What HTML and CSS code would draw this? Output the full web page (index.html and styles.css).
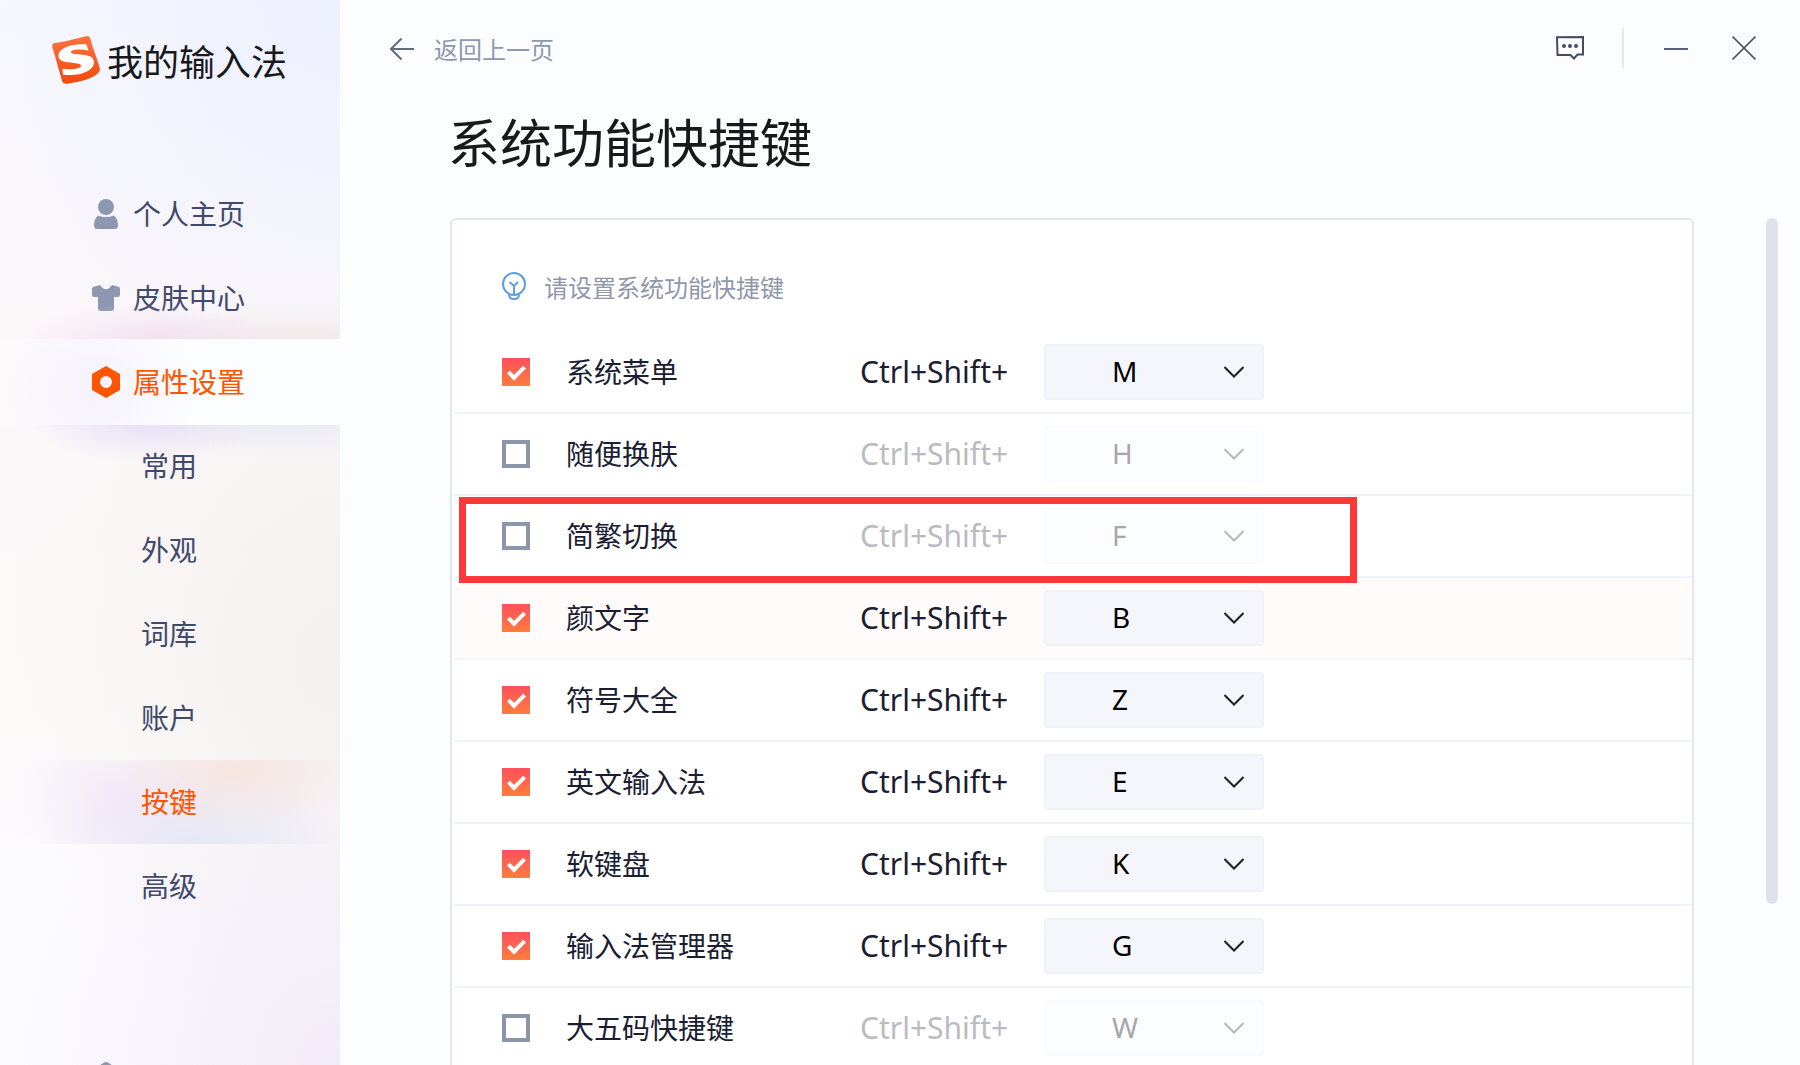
FILE: index.html
```
<!DOCTYPE html>
<html lang="zh-CN">
<head>
    <meta charset="UTF-8">
    <meta name="viewport" content="width=device-width, initial-scale=1.0">
    <title>系统功能快捷键</title>
    <link rel="stylesheet" href="styles.css">
</head>
<body>

    <aside class="sidebar">
        <div class="logo">
            <svg width="50" height="50" viewBox="0 0 50 50">
                <defs>
                    <linearGradient id="logoFill" x1="0" y1="0" x2="0" y2="1">
                        <stop offset="0" stop-color="#fb7340"/>
                        <stop offset="1" stop-color="#f14a0c"/>
                    </linearGradient>
                </defs>
                <path fill="url(#logoFill)" d="M3 8C14 6.500 24 3.500 34 1.200q3.500-.7 4.500 2.800c2 9 6.500 19 9 28 1 3.500 0 5.500-3 7.500-8 5.500-18 7.500-29 9.300-3.500.4-5-.8-5.800-4C6.500 34 3.500 22 .4 12.500Q-.4 8.500 3 8z"/>
                <path fill="#fff" d="M34.500 9.500C22 8.500 6.500 12 6.500 21c0 9.500 22.500 5 22.500 9.500 0 3.500-10 4.500-18.500 3.300l.5 6C28 41.500 42 36 42 27c0-10.500-23-6-23-9.800 0-3.200 9-3.500 17.500-1.700z"/>
            </svg>
            <span class="logo-text">我的输入法</span>
        </div>

        <nav class="nav">
            <a class="nav-item" href="#">
                <svg width="28" height="32" viewBox="0 0 28 32" fill="#8d98b0"><circle cx="14" cy="9" r="8"/><path d="M6 17.500q8 3 16 0 4 3.500 4 10 0 3.500-3 3.500H5q-3 0-3-3.500 0-6.500 4-10z"/></svg>
                个人主页
            </a>
            <a class="nav-item" href="#">
                <svg width="28" height="32" viewBox="0 0 28 32" fill="#8d98b0"><path d="M8 3q6 8.500 12 0l7 2q1 .5 1 1.500V13q0 2-2 2h-4v11q0 3-3 3H9q-3 0-3-3V15H2q-2 0-2-2V6.500Q0 5.500 1 5z"/></svg>
                皮肤中心
            </a>
            <a class="nav-item nav-active" href="#">
                <svg width="28" height="32" viewBox="0 0 28 32"><path fill="#ff5400" fill-rule="evenodd" d="M14 0l14 8v16l-14 8-14-8V8zM14 10a6 6 0 1 0 0 12 6 6 0 0 0 0-12z"/></svg>
                属性设置
            </a>
            <a class="nav-item nav-sub" href="#">常用</a>
            <a class="nav-item nav-sub" href="#">外观</a>
            <a class="nav-item nav-sub" href="#">词库</a>
            <a class="nav-item nav-sub" href="#">账户</a>
            <a class="nav-item nav-sub nav-current" href="#">按键</a>
            <a class="nav-item nav-sub" href="#">高级</a>
        </nav>

        <div class="nav-more">
            <svg width="28" height="28" viewBox="0 0 28 28" fill="#8d98b0"><path d="M12 .5q2-1 4 0l12 8V28H0V8.500z"/></svg>
        </div>
    </aside>

    <main class="main">
        <header class="topbar">
            <a class="back" href="#">
                <svg width="24" height="24" viewBox="0 0 24 24" fill="none" stroke="#626b80" stroke-width="2"><path d="M24 13H1.500M11.500 2.500L1 13l10.500 10.500"/></svg>
                返回上一页
            </a>
            <div class="window-buttons">
                <button type="button" class="win-btn" aria-label="反馈">
                    <svg width="28" height="24" viewBox="0 0 28 24"><path fill="#fff" stroke="#454b66" stroke-width="2" d="M1 1.200L27 1v17.500h-5.500L18 22.500l-3.500-3.500H1.500z"/><g fill="#454b66"><circle cx="8" cy="10" r="2"/><circle cx="14" cy="10" r="2"/><circle cx="20" cy="10" r="2"/></g></svg>
                </button>
                <span class="win-line"></span>
                <button type="button" class="win-btn" aria-label="最小化">
                    <svg width="24" height="24" viewBox="0 0 24 24"><path stroke="#5a6180" stroke-width="2" d="M0 13h24"/></svg>
                </button>
                <button type="button" class="win-btn win-close" aria-label="关闭">
                    <svg width="24" height="24" viewBox="0 0 24 24"><path stroke="#4d536b" stroke-width="1.600" d="M.5.5l23 23M23.500.5l-23 23"/></svg>
                </button>
            </div>
        </header>

        <h1 class="title">系统功能快捷键</h1>

        <div class="content">
            <section class="card">
                <p class="hint">
                    <svg width="24" height="28" viewBox="0 0 24 28" fill="none" stroke="#5c9fe0" stroke-width="2"><circle cx="12" cy="12" r="11"/><path d="M12 23V14M7.500 10l4.500 4 4-4"/><path d="M7 22.500q0 4.500 5 4.500t5-4.500" /></svg>
                    请设置系统功能快捷键
                </p>
                <div id="rows"></div>
            </section>
            <div class="scroll-track"><div class="scroll-thumb"></div></div>
        </div>
    </main>

    <script>
        var shortcuts = [
            { name: '系统菜单', key: 'M', on: true },
            { name: '随便换肤', key: 'H', on: false },
            { name: '简繁切换', key: 'F', on: false, marked: true },
            { name: '颜文字', key: 'B', on: true, hover: true },
            { name: '符号大全', key: 'Z', on: true },
            { name: '英文输入法', key: 'E', on: true },
            { name: '软键盘', key: 'K', on: true },
            { name: '输入法管理器', key: 'G', on: true },
            { name: '大五码快捷键', key: 'W', on: false }
        ];

        var html = '';
        shortcuts.forEach(function (item, i) {
            var cls = 'row' + (item.on ? '' : ' row-off') + (item.hover ? ' row-hover' : '') + (item.marked ? ' row-marked' : '');
            html += '<div class="' + cls + '">' +
                '<input type="checkbox" class="check" id="check' + i + '"' + (item.on ? ' checked' : '') + '>' +
                '<label class="name" for="check' + i + '">' + item.name + '</label>' +
                '<label class="combo" for="key' + i + '">Ctrl+Shift+</label>' +
                '<span class="select-wrap">' +
                '<select class="key" id="key' + i + '"' + (item.on ? '' : ' disabled') + '><option>' + item.key + '</option></select>' +
                '<svg class="arrow" width="20" height="12" viewBox="0 0 20 12" fill="none" stroke="#202124" stroke-width="2"><path d="M.5 1l9.500 9.500L19.500 1"/></svg>' +
                '</span></div>';
        });
        document.getElementById('rows').innerHTML = html;

        // Enable or disable the key list together with its checkbox
        document.getElementById('rows').addEventListener('change', function (e) {
            if (e.target.type !== 'checkbox') {
                return;
            }
            var row = e.target.parentNode;
            row.classList.toggle('row-off', !e.target.checked);
            row.querySelector('select').disabled = !e.target.checked;
        });
    </script>

</body>
</html>
```

FILE: styles.css
```
*,
*::before,
*::after {
    box-sizing: border-box;
}

body {
    margin: 0;
    height: 100vh;
    display: flex;
    overflow: hidden;
    background: #fcfdff;
    color: #1b1d33;
    font-family: "Noto Sans", "Noto Sans CJK SC", sans-serif;
    font-size: 28px;
}

a {
    color: inherit;
    text-decoration: none;
}

svg {
    display: block;
    flex: none;
}

/* Sidebar */
.sidebar {
    flex: none;
    width: 340px;
    display: flex;
    flex-direction: column;
    background:
        radial-gradient(ellipse 400px 420px at 100% 0, #edf0fe 0%, rgba(237, 240, 254, 0) 100%),
        radial-gradient(ellipse 340px 330px at 100% 100%, #f2ebf8 0%, rgba(242, 235, 248, 0) 100%),
        radial-gradient(ellipse 340px 400px at 100% 62%, #f4f0ef 0%, rgba(244, 240, 239, 0) 100%),
        linear-gradient(#f8f8fe 0%, #fbf7f9 30%, #fcf9f9 65%, #fcfcff 90%);
    color: #41496a;
}

.logo {
    flex: none;
    display: flex;
    align-items: center;
    gap: 5px;
    height: 120px;
    padding-left: 52px;
    color: #17191c;
}

.logo-text {
    font-size: 36px;
}

.nav {
    flex: none;
    margin-top: 52px;
}

.nav-item {
    position: relative;
    z-index: 0;
    display: flex;
    align-items: center;
    gap: 13px;
    height: 84px;
    padding: 0 0 2px 92px;
}

.nav-item svg {
    margin-top: 2px;
}

.nav-sub {
    padding-left: 141px;
}

.nav-active,
.nav-current {
    color: #ff5400;
}

/* soft glow above and below the active group */
.nav-active::before {
    content: "";
    position: absolute;
    z-index: -2;
    inset: -40px 0;
    background:
        radial-gradient(ellipse 130px 40px at 44% 26%, rgba(240, 215, 236, 0.7), rgba(240, 215, 236, 0)),
        radial-gradient(ellipse 200px 36px at 90% 26%, rgba(240, 226, 224, 0.7), rgba(240, 226, 224, 0)),
        radial-gradient(ellipse 120px 44px at 42% 72%, rgba(226, 216, 246, 0.8), rgba(226, 216, 246, 0)),
        radial-gradient(ellipse 180px 40px at 84% 73%, rgba(228, 232, 246, 0.8), rgba(228, 232, 246, 0));
}

.nav-active::after {
    content: "";
    position: absolute;
    z-index: -1;
    inset: -1px 0;
    background:
        radial-gradient(ellipse 100px 90px at 28% 60%, #f5f2fc, rgba(245, 242, 252, 0)),
        linear-gradient(90deg, #fcf9fa, #fcfdff 50%);
}

.nav-current {
    background:
        radial-gradient(ellipse 120px 64px at 70% 10%, rgba(246, 222, 215, 0.7), rgba(246, 222, 215, 0)),
        radial-gradient(ellipse 110px 90px at 36% 50%, rgba(238, 226, 247, 0.7), rgba(238, 226, 247, 0)),
        radial-gradient(ellipse 150px 80px at 58% 100%, rgba(222, 229, 244, 0.8), rgba(222, 229, 244, 0));
}

.nav-more {
    margin-top: 134px;
    padding-left: 92px;
}

/* Main area */
.main {
    flex: 1;
    min-width: 0;
    display: flex;
    flex-direction: column;
}

.topbar {
    flex: none;
    display: flex;
    justify-content: space-between;
    align-items: center;
    height: 96px;
    padding: 0 44px 0 50px;
}

.back {
    display: flex;
    align-items: center;
    gap: 20px;
    font-size: 24px;
    color: #8d98b0;
}

.window-buttons {
    display: flex;
    align-items: center;
    gap: 38px;
}

.win-btn {
    padding: 0;
    border: none;
    background: none;
    cursor: pointer;
}

.win-close {
    margin-left: 6px;
}

.win-line {
    width: 2px;
    height: 40px;
    margin-right: 2px;
    background: #e6e8ef;
}

.title {
    margin: 0;
    padding-left: 108px;
    height: 122px;
    font-size: 52px;
    font-weight: 400;
    line-height: 94px;
    color: #17191c;
}

.content {
    flex: 1;
    min-height: 0;
    display: flex;
    gap: 72px;
    padding: 0 22px 0 110px;
}

.card {
    flex: 1;
    align-self: flex-start;
    padding: 0 0 40px 2px;
    background: #fff;
    border: 2px solid #e4e6ee;
    border-radius: 6px;
}

.hint {
    display: flex;
    align-items: center;
    gap: 18px;
    height: 112px;
    margin: 0;
    padding: 20px 0 0 48px;
    font-size: 24px;
    color: #8f98ab;
}

.row {
    position: relative;
    display: flex;
    align-items: center;
    height: 82px;
    padding-left: 48px;
    border-bottom: 2px solid #f0f4f8;
}

.row-hover {
    background: #fffbfa;
}

.row-marked::after {
    content: "";
    position: absolute;
    z-index: 1;
    top: 1px;
    left: 5px;
    width: 898px;
    height: 86px;
    border: 7px solid #fc3838;
    pointer-events: none;
}

.check {
    appearance: none;
    flex: none;
    width: 28px;
    height: 28px;
    margin: 0 36px 0 0;
    border: 4px solid #8d96a8;
}

.check:checked {
    border: none;
    background: linear-gradient(#ff4f5e, #ff7d3c);
}

.check:checked::after {
    content: "";
    display: block;
    width: 17px;
    height: 10px;
    margin: 8px 0 0 6px;
    border: solid #fff;
    border-width: 0 0 4px 4px;
    transform: rotate(-45deg);
}

.name,
.combo {
    padding-bottom: 2px;
}

.name {
    width: 294px;
}

.combo {
    width: 184px;
    font-size: 30px;
}

.select-wrap {
    position: relative;
    width: 220px;
}

.key {
    appearance: none;
    display: block;
    width: 100%;
    height: 56px;
    padding: 0 0 2px 66px;
    border: 2px solid #f0f2fa;
    border-radius: 4px;
    background: #f5f6fc;
    color: #000;
    font: inherit;
    opacity: 1;
}

.arrow {
    position: absolute;
    top: 22px;
    right: 20px;
    pointer-events: none;
}

.row-off .combo {
    color: #babbc2;
}

.row-off .key {
    border-color: #fafbfe;
    background: #fcfdff;
    color: #a7a7ab;
}

.row-off .arrow {
    opacity: 0.3;
}

.scroll-track {
    flex: none;
    width: 12px;
}

.scroll-thumb {
    height: 81%;
    border-radius: 6px;
    background: #dfe1ed;
}
```
